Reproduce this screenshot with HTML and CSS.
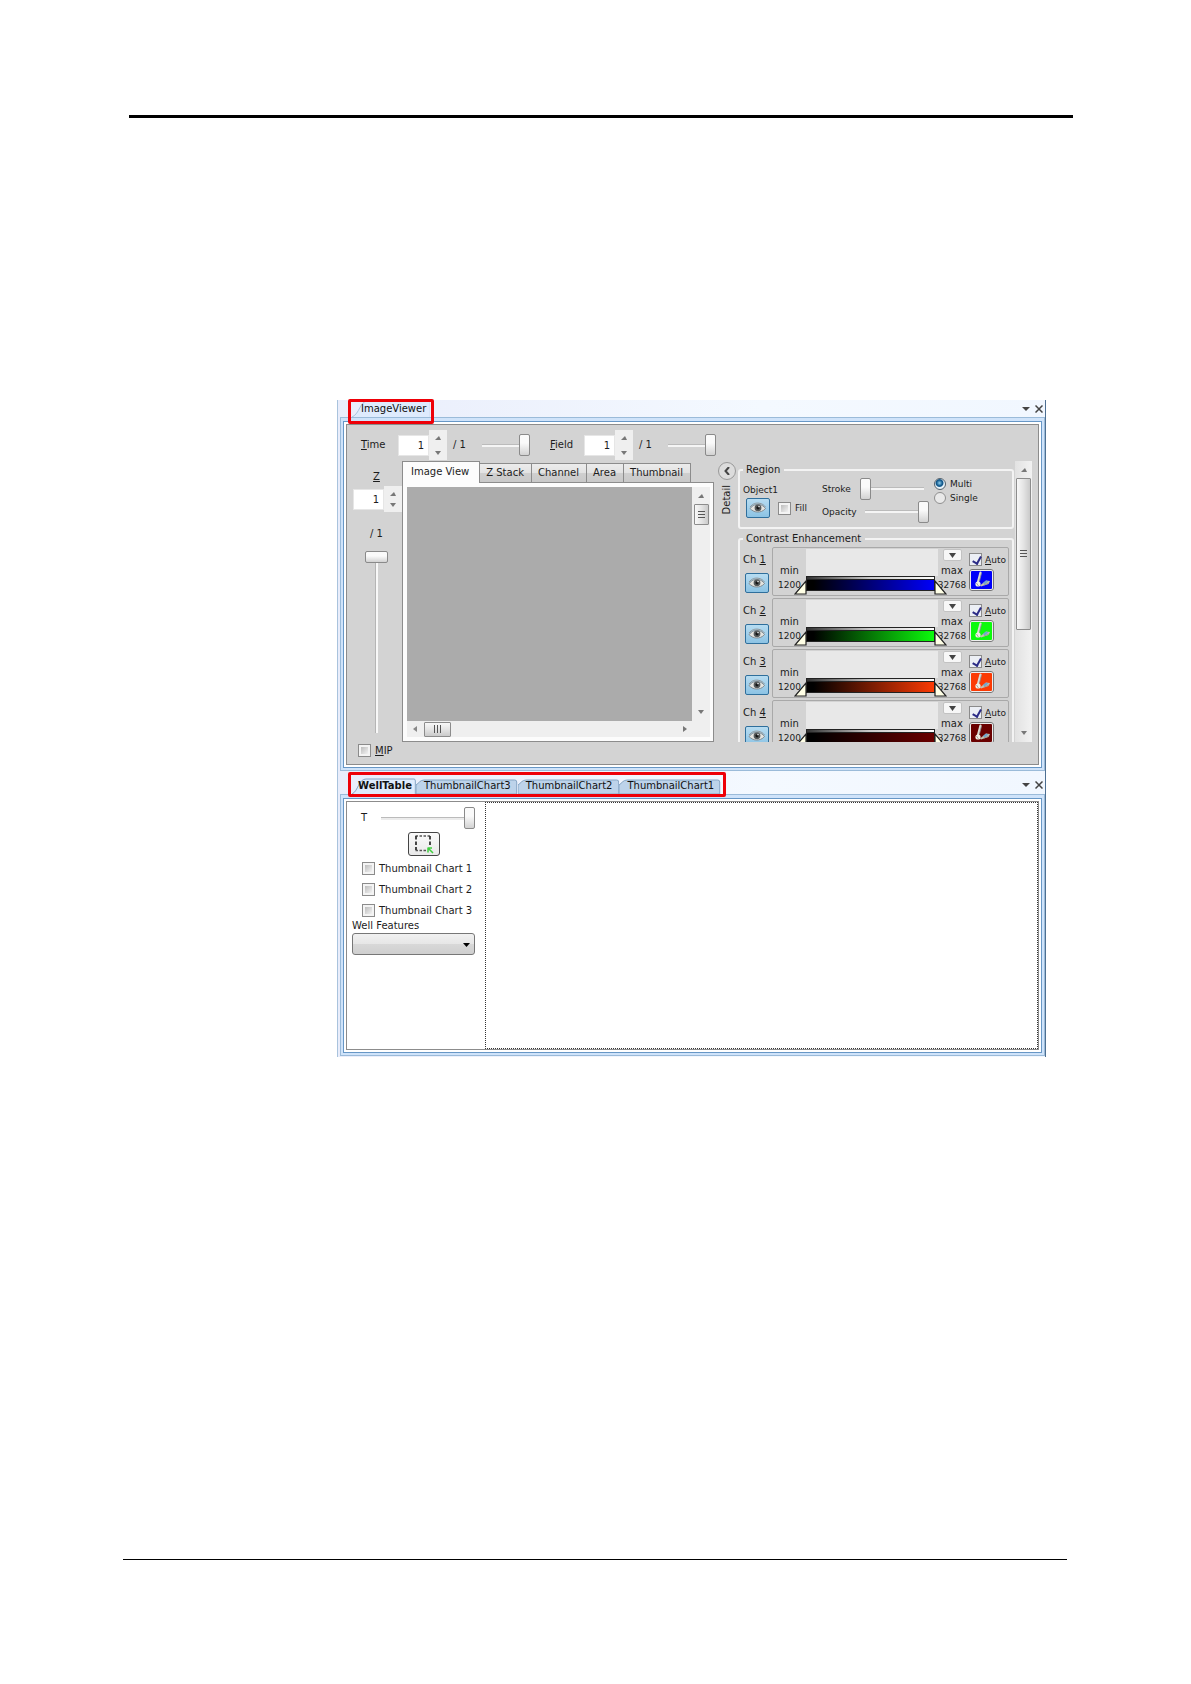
FILE: index.html
```html
<!DOCTYPE html>
<html lang="en">
<head>
<meta charset="utf-8">
<title>ImageViewer and WellTable</title>
<link rel="stylesheet" href="styles.css">
</head>
<body>
<svg class="defs" aria-hidden="true">
  <symbol id="eye" viewBox="0 0 18 12">
    <path d="M1 6.500C4 3 7 2 10 2.500c3 .4 5 2 6.500 4C14 9.500 11 10 8.500 10 5.500 10 3 8.500 1 6.500z" fill="#e4e4e0" stroke="#74797c" stroke-width=".8"/>
    <path d="M1 5C4 1.500 7 .8 10 1.200c3 .4 5 1.800 6.500 3.800" fill="none" stroke="#8c8f90" stroke-width=".9"/>
    <circle cx="9" cy="5.800" r="3.400" fill="#55595a"/>
    <circle cx="9" cy="5.800" r="1.600" fill="#151515"/>
    <circle cx="10" cy="4.600" r=".8" fill="#eee"/>
  </symbol>
  <symbol id="brush" viewBox="0 0 20 18">
    <path d="M8.500 1.500L6 11" stroke="#dcdcd4" stroke-width="2.200" stroke-linecap="round"/>
    <path d="M9.500 2L7.500 10" stroke="#8b8f90" stroke-width=".8"/>
    <path d="M8 14.500l6-5 4 .5-1.500 3-7.500 2.500z" fill="#c2bfb0"/>
    <path d="M11 12l3-2.500 2.500 1-4 3z" fill="#6ea6cf"/>
    <circle cx="6" cy="13" r="2.600" fill="#f0efe6"/>
    <path d="M4.500 12l2 3M12 14l5-2" stroke="#97968b" stroke-width=".8"/>
  </symbol>
  <symbol id="up" viewBox="0 0 6 4"><path d="M0 4L4 0 6 4z" fill="#777"/></symbol>
  <symbol id="down" viewBox="0 0 6 4"><path d="M0 0h6L3 4z" fill="#777"/></symbol>
  <symbol id="left" viewBox="0 0 4 6"><path d="M4 0v6L0 3z" fill="#888"/></symbol>
  <symbol id="right" viewBox="0 0 4 6"><path d="M0 0v6l4-3z" fill="#777"/></symbol>
  <symbol id="menu" viewBox="0 0 8 4"><path d="M0 0h8L4 4z" fill="#444"/></symbol>
  <symbol id="close" viewBox="0 0 8 8"><path d="M.5 .5l7 7M7.500 .5l-7 7" stroke="#444" stroke-width="1.500"/></symbol>
  <symbol id="handle-l" viewBox="0 0 13 15"><path d="M12 1v13H1z" fill="#ffffe6" stroke="#222" stroke-width="1.200"/></symbol>
  <symbol id="handle-r" viewBox="0 0 13 15"><path d="M1 1v13h11z" fill="#ffffe6" stroke="#222" stroke-width="1.200"/></symbol>
</svg>

<hr class="rule-top">

<main class="workspace">
  <section class="dock">
    <header class="dock-head">
      <div class="dock-tabs">
        <button class="dock-tab current single"><svg viewBox="0 0 100 16" preserveAspectRatio="none"><path d="M0 16C10 13 10 1 20 1h80v15"/></svg><span>ImageViewer</span></button>
        <span class="callout"></span>
      </div>
      <button class="bare" aria-label="Window menu"><svg width="8" height="4"><use href="#menu"/></svg></button>
      <button class="bare" aria-label="Close"><svg width="8" height="8"><use href="#close"/></svg></button>
    </header>
    <div class="frame"><div class="frame-in"><div class="pane gray">
      <div class="toolbar">
        <label class="tool-label" for="time"><u>T</u>ime</label>
        <div class="spinner tall"><input id="time" type="text" value="1"><span><button aria-label="Time up"><svg width="6" height="4"><use href="#up"/></svg></button><button aria-label="Time down"><svg width="6" height="4"><use href="#down"/></svg></button></span></div>
        <span class="total">/ 1</span>
        <input class="slider" type="range" min="0" max="1" value="1" aria-label="Time">
        <label class="tool-label field" for="field"><u>F</u>ield</label>
        <div class="spinner tall"><input id="field" type="text" value="1"><span><button aria-label="Field up"><svg width="6" height="4"><use href="#up"/></svg></button><button aria-label="Field down"><svg width="6" height="4"><use href="#down"/></svg></button></span></div>
        <span class="total">/ 1</span>
        <input class="slider" type="range" min="0" max="1" value="1" aria-label="Field">
      </div>

      <div class="viewer-row">
        <div class="z-column">
          <label for="z"><u>Z</u></label>
          <div class="spinner"><input id="z" type="text" value="1"><span><button aria-label="Z up"><svg width="6" height="4"><use href="#up"/></svg></button><button aria-label="Z down"><svg width="6" height="4"><use href="#down"/></svg></button></span></div>
          <span class="z-total">/ 1</span>
          <input class="slider vertical" type="range" min="0" max="1" value="0" aria-label="Z">
        </div>

        <div class="viewer">
          <div class="tabs" role="tablist">
            <button role="tab" class="tab active" aria-selected="true">Image View</button>
            <button role="tab" class="tab">Z Stack</button>
            <button role="tab" class="tab">Channel</button>
            <button role="tab" class="tab">Area</button>
            <button role="tab" class="tab">Thumbnail</button>
          </div>
          <div class="tab-body">
            <div class="canvas"></div>
            <div class="scroll-v">
              <svg width="6" height="4"><use href="#up"/></svg>
              <span class="thumb"><i></i></span>
              <svg class="last" width="6" height="4"><use href="#down"/></svg>
            </div>
            <div class="scroll-h">
              <svg width="4" height="6"><use href="#left"/></svg>
              <span class="thumb"><i></i></span>
              <svg class="last" width="4" height="6"><use href="#right"/></svg>
            </div>
          </div>
        </div>

        <div class="detail-strip">
          <button class="collapse" aria-label="Collapse detail"><svg width="6" height="8" viewBox="0 0 6 8"><path d="M5 0L1.500 4 5 8" fill="none" stroke="#444" stroke-width="2"/></svg></button>
          <span class="detail-text">Detail</span>
        </div>

        <div class="detail">
          <fieldset class="group region">
            <legend>Region</legend>
            <div class="object">
              <span>Object1</span>
              <div class="object-row">
                <button class="eye" aria-label="Show object"><svg width="18" height="12"><use href="#eye"/></svg></button>
                <label class="check"><input type="checkbox">Fill</label>
              </div>
            </div>
            <div class="adjust">
              <label for="stroke">Stroke</label><input id="stroke" class="slider" type="range" min="0" max="1" value="0">
              <label for="opacity">Opacity</label><input id="opacity" class="slider" type="range" min="0" max="1" value="1">
            </div>
            <div class="radios">
              <label><input type="radio" name="mode" checked>Multi</label>
              <label><input type="radio" name="mode">Single</label>
            </div>
          </fieldset>

          <fieldset class="group contrast">
            <legend>Contrast Enhancement</legend>
            <div class="channel blue">
              <div class="ch-side"><span>Ch <u>1</u></span><button class="eye" aria-label="Show channel 1"><svg width="18" height="12"><use href="#eye"/></svg></button></div>
              <div class="ch-box">
                <div class="limit"><span>min</span><small>1200</small></div>
                <div class="histogram"><div class="ramp"><svg class="h-left" width="13" height="15"><use href="#handle-l"/></svg><svg class="h-right" width="13" height="15"><use href="#handle-r"/></svg></div></div>
                <div class="limit max"><button class="drop" aria-label="Range"><svg width="7" height="5" viewBox="0 0 8 4" preserveAspectRatio="none"><use href="#menu"/></svg></button><span>max</span><small>32768</small></div>
                <div class="ch-tools"><label class="check"><input type="checkbox" checked><span><u>A</u>uto</span></label><button class="brush" aria-label="Colour"><svg width="20" height="18"><use href="#brush"/></svg></button></div>
              </div>
            </div>
            <div class="channel green">
              <div class="ch-side"><span>Ch <u>2</u></span><button class="eye" aria-label="Show channel 2"><svg width="18" height="12"><use href="#eye"/></svg></button></div>
              <div class="ch-box">
                <div class="limit"><span>min</span><small>1200</small></div>
                <div class="histogram"><div class="ramp"><svg class="h-left" width="13" height="15"><use href="#handle-l"/></svg><svg class="h-right" width="13" height="15"><use href="#handle-r"/></svg></div></div>
                <div class="limit max"><button class="drop" aria-label="Range"><svg width="7" height="5" viewBox="0 0 8 4" preserveAspectRatio="none"><use href="#menu"/></svg></button><span>max</span><small>32768</small></div>
                <div class="ch-tools"><label class="check"><input type="checkbox" checked><span><u>A</u>uto</span></label><button class="brush" aria-label="Colour"><svg width="20" height="18"><use href="#brush"/></svg></button></div>
              </div>
            </div>
            <div class="channel orange">
              <div class="ch-side"><span>Ch <u>3</u></span><button class="eye" aria-label="Show channel 3"><svg width="18" height="12"><use href="#eye"/></svg></button></div>
              <div class="ch-box">
                <div class="limit"><span>min</span><small>1200</small></div>
                <div class="histogram"><div class="ramp"><svg class="h-left" width="13" height="15"><use href="#handle-l"/></svg><svg class="h-right" width="13" height="15"><use href="#handle-r"/></svg></div></div>
                <div class="limit max"><button class="drop" aria-label="Range"><svg width="7" height="5" viewBox="0 0 8 4" preserveAspectRatio="none"><use href="#menu"/></svg></button><span>max</span><small>32768</small></div>
                <div class="ch-tools"><label class="check"><input type="checkbox" checked><span><u>A</u>uto</span></label><button class="brush" aria-label="Colour"><svg width="20" height="18"><use href="#brush"/></svg></button></div>
              </div>
            </div>
            <div class="channel maroon">
              <div class="ch-side"><span>Ch <u>4</u></span><button class="eye" aria-label="Show channel 4"><svg width="18" height="12"><use href="#eye"/></svg></button></div>
              <div class="ch-box">
                <div class="limit"><span>min</span><small>1200</small></div>
                <div class="histogram"><div class="ramp"><svg class="h-left" width="13" height="15"><use href="#handle-l"/></svg><svg class="h-right" width="13" height="15"><use href="#handle-r"/></svg></div></div>
                <div class="limit max"><button class="drop" aria-label="Range"><svg width="7" height="5" viewBox="0 0 8 4" preserveAspectRatio="none"><use href="#menu"/></svg></button><span>max</span><small>32768</small></div>
                <div class="ch-tools"><label class="check"><input type="checkbox" checked><span><u>A</u>uto</span></label><button class="brush" aria-label="Colour"><svg width="20" height="18"><use href="#brush"/></svg></button></div>
              </div>
            </div>
          </fieldset>
        </div>
        <div class="scroll-v outer">
          <svg width="6" height="4"><use href="#up"/></svg>
          <span class="thumb long"><i></i></span>
          <svg class="last" width="6" height="4"><use href="#down"/></svg>
        </div>
      </div>

      <div class="pane-foot"><label class="check"><input type="checkbox"><span><u>M</u>IP</span></label></div>
    </div></div></div>
  </section>

  <section class="dock">
    <header class="dock-head tall">
      <div class="dock-tabs">
        <button class="dock-tab current"><svg viewBox="0 0 100 16" preserveAspectRatio="none"><path d="M0 16C10 13 10 1 22 1h75q2 0 2 2v13"/></svg><span>WellTable</span></button>
        <button class="dock-tab wide"><svg viewBox="0 0 100 16" preserveAspectRatio="none"><path d="M0 7C3 5 4 2 8 2h89q2 0 2 2v12H0z"/></svg><span>ThumbnailChart3</span></button>
        <button class="dock-tab wide"><svg viewBox="0 0 100 16" preserveAspectRatio="none"><path d="M0 7C3 5 4 2 8 2h89q2 0 2 2v12H0z"/></svg><span>ThumbnailChart2</span></button>
        <button class="dock-tab wide"><svg viewBox="0 0 100 16" preserveAspectRatio="none"><path d="M0 7C3 5 4 2 8 2h89q2 0 2 2v12H0z"/></svg><span>ThumbnailChart1</span></button>
        <span class="callout"></span>
      </div>
      <button class="bare" aria-label="Window menu"><svg width="8" height="4"><use href="#menu"/></svg></button>
      <button class="bare" aria-label="Close"><svg width="8" height="8"><use href="#close"/></svg></button>
    </header>
    <div class="frame"><div class="frame-in"><div class="pane well">
      <div class="well-side">
        <div class="t-row"><label for="t">T</label><input id="t" class="slider" type="range" min="0" max="1" value="1"></div>
        <button class="select-area" aria-label="Select area"><svg width="20" height="20" viewBox="0 0 20 20"><path d="M1.500 2h15M1.500 16.500h11" stroke="#555" stroke-width="1.400" stroke-dasharray="2.500 1.500"/><path d="M2 2v14M16 2v10" stroke="#333" stroke-width="1.800" stroke-dasharray="3.500 2"/><path d="M13.500 14h4.500M14 14v4.500M14 14l5 5" stroke="#3fce3f" stroke-width="1.500"/></svg></button>
        <div class="charts">
          <label class="check"><input type="checkbox">Thumbnail Chart 1</label>
          <label class="check"><input type="checkbox">Thumbnail Chart 2</label>
          <label class="check"><input type="checkbox">Thumbnail Chart 3</label>
        </div>
        <label class="features" for="features">Well Features</label>
        <div class="select-wrap"><select id="features"><option></option></select><svg width="7" height="4" viewBox="0 0 7 4"><path d="M0 0h7L3.500 4z"/></svg></div>
      </div>
      <div class="well-area"></div>
    </div></div></div>
  </section>
</main>

<hr class="rule-bottom">
</body>
</html>
```

FILE: styles.css
```css
* { box-sizing: border-box; }

body {
  margin: 0;
  min-height: 100vh;
  display: flow-root;
  background: #fff;
  color: #1c1c1c;
  font: 10px/12px "DejaVu Sans", Verdana, sans-serif;
}

button, input, select { font: inherit; color: inherit; margin: 0; padding: 0; }
button { border: 0; background: none; }
svg { display: block; flex: none; }
.defs { position: absolute; width: 0; height: 0; }

.rule-top { height: 3px; margin: 115px 118px 0 129px; border: 0; background: #000; }
.rule-bottom { height: 1px; margin: 502px 124px 0 123px; border: 0; background: #000; }

/* docked windows */
.workspace {
  margin: 282px 145px 0 337px;
  padding: 0 0 1px 2px;
  border-left: 1px solid #a9c3dd;
  border-right: 1px solid #4d6f92;
  background: linear-gradient(90deg, #e9edfb, #f4f9ff 60%, #f1f7ff);
}
.dock-head { display: flex; align-items: center; height: 17px; }
.dock-head.tall { height: 23px; }
.dock-tabs { position: relative; display: flex; align-items: flex-end; align-self: stretch; margin: 0 auto 0 12px; }
.dock-tab { position: relative; height: 16px; padding: 0 4px 0 6px; }
.dock-tab.wide { padding: 0 7px 0 8px; }
.dock-tab svg { position: absolute; inset: 0; width: 100%; height: 100%; }
.dock-tab path { fill: #b4cfee; stroke: #86a5c4; vector-effect: non-scaling-stroke; }
.dock-tab.wide path { fill: #bdd3ea; }
.dock-tab.current path { fill: #deebfd; }
.dock-tab.single { padding-left: 9px; height: 17px; }
.dock-tab.single path { stroke: #a9c3dd; }
.dock-tab span { position: relative; color: #111; }
.dock-tab.current:not(.single) { font-weight: bold; }
.callout { position: absolute; inset: -1px -4px -7px -4px; border: 3px solid #ee0008; border-radius: 2px; }
.tall .callout { inset: 1px -5px -3px -4px; }
.bare { display: flex; align-items: center; justify-content: center; width: 13px; height: 14px; }
.tall .bare { margin-top: 4px; }

.frame { padding: 3px 2px 2px; border: 1px solid #9bbbd9; background: #cfe3fa; }
.frame-in { padding: 2px; border: 1px solid #6797c6; background: #fff; }
.pane { border: 1px solid #8c8c8c; background: #fff; }
.pane.gray { background: #d3d3d3; }

/* spin boxes */
.toolbar { display: flex; align-items: center; height: 36px; padding: 4px 0 0 14px; }
.tool-label { width: 37px; }
.tool-label.field { width: 34px; margin-left: 20px; }
.total { width: 35px; padding-left: 6px; }
.toolbar .slider { width: 48px; }
.spinner { display: flex; align-items: center; height: 26px; }
.spinner.tall { height: 30px; }
.spinner input { width: 31px; height: 21px; padding-right: 4px; border: 1px solid #e6e6e6; background: #fff; text-align: right; }
.spinner span { display: flex; flex-direction: column; justify-content: space-between; align-self: stretch; width: 18px; padding: 2px 0; background: #efefef; }
.spinner button { display: flex; align-items: center; justify-content: center; height: 11px; }

/* sliders */
.slider { appearance: none; height: 22px; background: linear-gradient(#bbb 33%, #f5f5f5 33%) center / 100% 3px no-repeat; }
.slider::-webkit-slider-thumb { appearance: none; width: 11px; height: 22px; border: 1px solid #8a8a8a; border-radius: 2px; background: linear-gradient(#fafafa 40%, #d2d2d2); }
.slider.vertical { writing-mode: vertical-lr; width: 23px; height: 182px; background: linear-gradient(90deg, #b5b5b5 33%, #f8f8f8 33%) center / 3px 100% no-repeat; }
.slider.vertical::-webkit-slider-thumb { width: 23px; height: 12px; }

/* check boxes and radios */
.check { display: flex; align-items: center; gap: 4px; white-space: nowrap; }
.check input { appearance: none; flex: none; width: 13px; height: 13px; border: 1px solid #8b8b8b; background: linear-gradient(135deg, #bdbdbd, #f2f2f2) center / 7px 7px no-repeat #f4f4f4; }
.check input:checked { position: relative; background: #eceff5; }
.check input:checked::after { content: ""; position: absolute; left: 4px; top: 1px; width: 4px; height: 7px; border: solid #2b2b86; border-width: 0 2px 2px 0; transform: rotate(30deg); }
.radios label { display: flex; align-items: center; gap: 4px; height: 14px; }
.radios input { appearance: none; width: 12px; height: 12px; border: 1px solid #8f8f8f; border-radius: 50%; background: #e9e9e9; }
.radios input:checked { border-color: #56626c; background: radial-gradient(circle at 45% 40%, #8fd2f2, #13598c 35%, #13598c 42%, #e8f3fa 55%); }

/* viewer */
.viewer-row { display: flex; height: 281px; padding-right: 6px; }
.z-column { display: flex; flex-direction: column; align-items: center; width: 55px; padding: 10px 0 0 4px; }
.z-column .spinner { align-self: flex-end; margin-top: 3px; }
.z-total { margin: 16px 0 11px; }
.viewer { flex: 1; min-width: 0; display: flex; flex-direction: column; }
.tabs { display: flex; align-items: flex-end; height: 22px; }
.tab { position: relative; height: 20px; margin-left: -1px; padding: 0 7px 1px 6px; border: 1px solid #8c8c8c; background: linear-gradient(#ececec, #e2e2e2 50%, #cfcfcf 50%, #c9c9c9); white-space: nowrap; }
.tab.active { z-index: 1; height: 22px; margin: 0; padding: 0 10px 2px 8px; border-bottom: 0; background: #fcfcfc; }
.tab-body { flex: 1; display: grid; grid-template: 1fr 16px / 1fr 18px; margin-top: -1px; padding: 4px 3px 4px 4px; border: 1px solid #8c8c8c; background: #fcfcfc; }
.canvas { background: #ababab; }

.scroll-v, .scroll-h { display: flex; align-items: center; background: #efefef; }
.scroll-v { flex-direction: column; padding: 7px 0; }
.scroll-h { grid-column: 1 / 3; padding: 0 23px 0 6px; }
.scroll-v .last { margin-top: auto; }
.scroll-h .last { margin-left: auto; }
.thumb { display: flex; align-items: center; justify-content: center; border: 1px solid #8c8c8c; border-radius: 1px; background: linear-gradient(90deg, #f8f8f8, #e4e4e4 50%, #cacaca); }
.thumb i { width: 7px; height: 8px; background: repeating-linear-gradient(#555 0 1px, transparent 1px 3px); }
.scroll-v .thumb { width: 15px; height: 21px; margin-top: 6px; }
.scroll-v .thumb.long { height: 152px; }
.scroll-h .thumb { width: 27px; height: 15px; margin-left: 7px; background: linear-gradient(#f8f8f8, #e4e4e4 50%, #cacaca); }
.scroll-h .thumb i { background: repeating-linear-gradient(90deg, #555 0 1px, transparent 1px 3px); }
.scroll-v.outer { width: 17px; background: linear-gradient(90deg, #e2e2e2, #f2f2f2); }

.detail-strip { display: flex; flex-direction: column; align-items: center; gap: 5px; width: 23px; padding: 1px 0 0 2px; }
.collapse { display: flex; align-items: center; justify-content: center; width: 18px; height: 18px; border: 1px solid #999; border-radius: 50%; background: #dcdcdc; }
.detail-text { writing-mode: vertical-rl; transform: rotate(180deg); }

/* detail groups */
.detail { width: 278px; padding: 3px 1px 0; overflow: hidden; }
.group { min-width: 0; margin: 0 0 4px; padding: 0 3px; border: 2px solid #f3f3f3; border-radius: 3px; }
.group legend { padding: 0 4px 0 3px; height: 12px; }
.region { display: flex; height: 65px; font-size: 9px; }
.region legend { font-size: 10px; }
.object { width: 79px; padding-top: 8px; }
.object-row { display: flex; align-items: center; gap: 8px; margin: 2px 0 0 3px; }
.eye { display: flex; align-items: center; justify-content: center; width: 24px; height: 20px; border: 1px solid #2f6f9c; border-radius: 2px; background: linear-gradient(#b7dcf1, #8cc3e4); }
.adjust { display: grid; grid-template-columns: 38px 69px; grid-auto-rows: 23px; align-items: center; align-content: start; padding-top: 1px; }
.adjust .slider { background-size: 64px 3px; background-position-x: 0; }
.adjust #opacity { background-position-x: 5px; }
.radios { margin: 0 0 0 5px; padding-top: 1px; }

.contrast { padding-top: 2px; }
.channel { display: flex; height: 49px; margin-bottom: 2px; }
.ch-side { width: 29px; padding-top: 7px; white-space: nowrap; }
.ch-side .eye { margin: 7px 0 0 2px; }
.ch-box { flex: 1; display: flex; min-width: 0; border: 1px solid #a9a9a9; border-radius: 2px; }
.limit { display: flex; flex-direction: column; justify-content: flex-end; align-items: center; gap: 2px; width: 33px; padding-bottom: 4px; }
.limit small { font-size: 9px; }
.limit.max { width: 28px; }
.drop { display: flex; align-items: center; justify-content: center; width: 19px; height: 12px; margin-bottom: 2px; border: 1px solid #c2c2c2; border-radius: 2px; background: #f7f7f7; }
.limit.max > * { flex: none; }
.histogram { flex: 1; display: flex; flex-direction: column; justify-content: flex-end; height: 42px; margin-top: 1px; padding-right: 3px; background: linear-gradient(#e8e8e8, #e8e8e8) 0 0 / 100% 27px no-repeat; }
.ramp { position: relative; height: 15px; border: 1px solid #222; background: linear-gradient(#222, #222) 0 2px / 100% 1px no-repeat, linear-gradient(90deg, #333, #ccc 50%, #fff) 0 0 / 100% 2px no-repeat, linear-gradient(90deg, #000 5%, var(--ink)); }
.h-left, .h-right { position: absolute; top: 3px; z-index: 1; }
.h-left { right: 100%; }
.h-right { left: 100%; }
.ch-tools { width: 39px; margin-left: 3px; padding-top: 5px; font-size: 9px; }
.ch-tools .check { gap: 3px; }
.brush { display: flex; align-items: center; justify-content: center; width: 25px; height: 22px; margin-top: 3px; border: 2px solid #eee; border-radius: 3px; outline: 1px solid #777; outline-offset: -1px; background: var(--ink); }
.blue { --ink: #0000fa; }
.green { --ink: #0cfa0c; }
.orange { --ink: #fb3a04; }
.maroon { --ink: #6a0000; }

.pane-foot { height: 22px; padding: 2px 11px; }

/* well table */
.well { display: flex; min-height: 249px; }
.well-side { display: flex; flex-direction: column; width: 138px; padding: 5px 10px 0 5px; }
.t-row { display: flex; align-items: center; padding-left: 9px; }
.t-row label { width: 20px; }
.t-row .slider { flex: 1; min-width: 0; background-image: linear-gradient(#bbb 33%, #ececec 33%); }
.select-area { display: flex; align-items: center; justify-content: center; width: 32px; height: 24px; margin: 3px 0 6px 56px; border: 1px solid #444; border-radius: 3px; background: linear-gradient(#fafafa, #e9e9e9); }
.charts { display: flex; flex-direction: column; gap: 8px; padding-left: 10px; }
.features { margin-top: 3px; }
.select-wrap { position: relative; margin-top: 1px; }
.select-wrap select { appearance: none; display: block; width: 100%; height: 22px; border: 1px solid #777; border-radius: 3px; background: linear-gradient(#f1f1f1, #e6e6e6 50%, #d8d8d8 50%, #cfcfcf); }
.select-wrap svg { position: absolute; right: 5px; top: 10px; pointer-events: none; }
.well-area { flex: 1; border: 1px dotted #333; }
```
